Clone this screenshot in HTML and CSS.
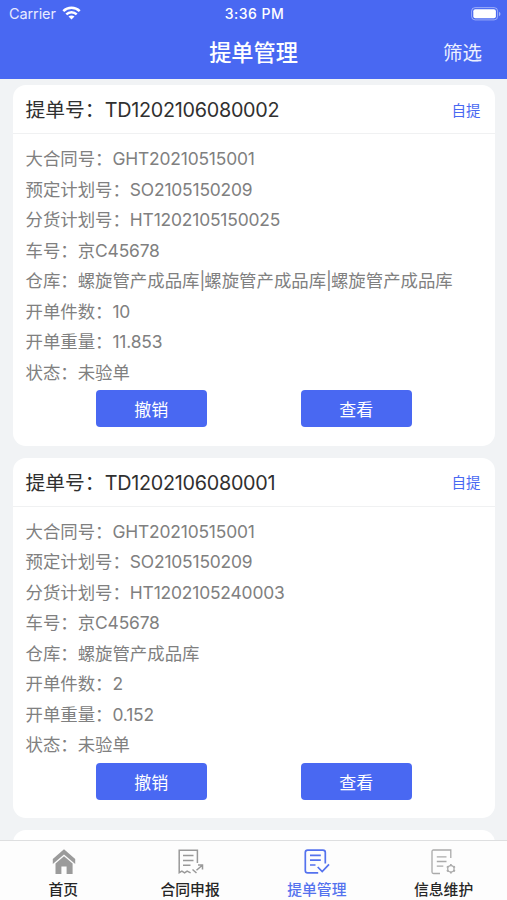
FILE: index.html
```html
<!DOCTYPE html>
<html lang="zh-CN">
<head>
<meta charset="utf-8">
<meta name="viewport" content="width=device-width, initial-scale=1">
<title>提单管理</title>
<link rel="stylesheet" href="styles.css">
</head>
<body>
<div class="app">
  <header class="header">
    <div class="status">
      <div class="carrier">Carrier
        <svg class="wifi" viewBox="0 0 18 14" fill="none" stroke="currentColor" stroke-width="2.5"><path d="M.8 5.100C5.300.6 12.700.6 17.200 5.100M3.800 8.400c3-2.900 7.400-2.900 10.400 0"/><path d="M9 13.500 6 10.600c1.700-1.500 4.300-1.500 6 0z" fill="currentColor" stroke="none"/></svg>
      </div>
      <div class="time">3:36 PM</div>
      <svg class="battery" viewBox="0 0 30 14"><rect x=".6" y=".6" width="26" height="12.300" rx="3.500" fill="none" stroke="currentColor" stroke-opacity=".45"/><rect x="2.300" y="2.300" width="22.600" height="9" rx="2" fill="currentColor"/><path d="M28 4.800v4.400q1.500-.7 1.500-2.200T28 4.800z" fill="currentColor" fill-opacity=".5"/></svg>
    </div>
    <div class="nav">
      <h1 class="nav-title">提单管理</h1>
      <span class="filter">筛选</span>
    </div>
  </header>
  <main class="list">
    <article class="card">
      <div class="card-head"><h2 class="card-title">提单号：<span class="number">TD1202106080002</span></h2><span class="tag">自提</span></div>
      <div class="rows">
        <p class="row">大合同号：<span class="value">GHT20210515001</span></p>
        <p class="row">预定计划号：<span class="value">SO2105150209</span></p>
        <p class="row">分货计划号：<span class="value">HT1202105150025</span></p>
        <p class="row">车号：京<span class="value">C45678</span></p>
        <p class="row">仓库：螺旋管产成品库<span class="bar">|</span>螺旋管产成品库<span class="bar">|</span>螺旋管产成品库</p>
        <p class="row">开单件数：<span class="value">10</span></p>
        <p class="row">开单重量：<span class="value">11.853</span></p>
        <p class="row">状态：未验单</p>
      </div>
      <div class="actions"><button class="btn">撤销</button><button class="btn">查看</button></div>
    </article>
    <article class="card">
      <div class="card-head"><h2 class="card-title">提单号：<span class="number">TD1202106080001</span></h2><span class="tag">自提</span></div>
      <div class="rows">
        <p class="row">大合同号：<span class="value">GHT20210515001</span></p>
        <p class="row">预定计划号：<span class="value">SO2105150209</span></p>
        <p class="row">分货计划号：<span class="value">HT1202105240003</span></p>
        <p class="row">车号：京<span class="value">C45678</span></p>
        <p class="row">仓库：螺旋管产成品库</p>
        <p class="row">开单件数：<span class="value">2</span></p>
        <p class="row">开单重量：<span class="value">0.152</span></p>
        <p class="row">状态：未验单</p>
      </div>
      <div class="actions"><button class="btn">撤销</button><button class="btn">查看</button></div>
    </article>
    <article class="card"></article>
  </main>
  <nav class="tabs">
    <div class="tab">
      <svg class="icon" viewBox="0 0 26 26" fill="#9b9b9b"><path d="M13 .2 24.200 9.900v5L13 5.400 1.800 14.900v-5z"/><path d="M13 7.200 21.600 14.500V25h-6v-7.600h-5.200V25H4.500V14.500z"/></svg>
      <span>首页</span>
    </div>
    <div class="tab">
      <svg class="icon" viewBox="0 0 26 26" fill="none" stroke="#999" stroke-width="1.500"><path d="M19.400 14V1.200H1.200v22.500l2.700-1.500 2.700 1.700 2.500-1.700 3.500 1.700M5 6.600h10.500M5 11.400h10.500M5 16.300h7.500M14.500 20.500l4 3.500M18.500 21.300l5.800-5M20 16h4.500v4.500"/></svg>
      <span>合同申报</span>
    </div>
    <div class="tab active">
      <svg class="icon" viewBox="0 0 26 26" fill="none" stroke="currentColor" stroke-width="1.700"><path d="M21.300 14.500V3.500q0-2.400-2.400-2.400H3.700q-2.400 0-2.400 2.400v18q0 2.400 2.400 2.400h10.500M6 6.300h10.800M6 11.200h10.800M6 16h5.500M13.700 18l4.500 4.600 6.800-7.300"/></svg>
      <span>提单管理</span>
    </div>
    <div class="tab">
      <svg class="icon" viewBox="0 0 26 26" fill="none" stroke="#aaa" stroke-width="1.300"><path d="M19.800 9V1H2.500Q1 1 1 2.500V23q0 1.500 1.500 1.500H9M5.800 7.800h9.700M5.800 12.500h9.700M5.800 17.200h6.500"/><circle cx="19.900" cy="19.800" r="3.200"/><path stroke-width="1.700" d="M19.900 15.100v1.500M19.900 23v1.500M15.800 17.450l1.300.75M22.700 21.400l1.300.75M15.800 22.150l1.300-.75M22.700 18.200l1.300-.75"/></svg>
      <span>信息维护</span>
    </div>
  </nav>
</div>
</body>
</html>
```

FILE: styles.css
```css
* { box-sizing: border-box; }
body { margin: 0; font-family: Inter, "Noto Sans CJK SC", sans-serif; }
h1, h2, p { margin: 0; font-weight: 400; }
.app { display: flex; flex-direction: column; height: 900px; overflow: hidden; background: #f1f3f5; }
.header { flex: 0 0 79px; background: #4968f2; color: #fff; }
.status { display: grid; grid-template-columns: 1fr auto 1fr; align-items: center; height: 27px; padding: 0 6px 0 9px; }
.carrier { display: flex; align-items: center; gap: 6px; font-size: 14.500px; letter-spacing: -0.1px; color: #e7eaff; }
.wifi { width: 19px; height: 14px; color: #fff; margin: -1px 0 0; }
.time { margin-right: 1px; font-size: 14px; font-weight: 500; letter-spacing: .5px; }
.battery { width: 30px; height: 14px; justify-self: end; }
.nav { display: grid; grid-template-columns: 1fr auto 1fr; align-items: center; height: 51px; padding: 1px 25px 0; }
.nav-title { grid-column: 2; font-size: 22.200px; font-weight: 500; line-height: 32px; }
.filter { justify-self: end; font-size: 19.500px; line-height: 30px; color: #edf0ff; }
.list { flex: 1; min-height: 0; overflow: hidden; padding: 6px 12.500px 0 13px; }
.card { height: 360.500px; margin-bottom: 12px; background: #fff; border-radius: 13px; }
.card-head { display: flex; align-items: center; justify-content: space-between; height: 49px; padding: 0 14px 0 12.500px; border-bottom: 1.500px solid #f0f1f2; }
.card-title { padding-top: 2px; font-size: 19.800px; line-height: 30px; color: #303030; white-space: nowrap; }
.number { letter-spacing: -0.27px; }
.tag { font-size: 14.500px; color: #4968f2; }
.rows { padding: 10px 0 0 12.500px; }
.row { height: 30.550px; line-height: 30.550px; font-size: 17.400px; color: #808080; white-space: nowrap; }
.value { letter-spacing: -0.17px; }
.bar { letter-spacing: -0.9px; }
.actions { display: flex; justify-content: space-between; padding: 2px 83px 0; }
.btn { width: 110.500px; height: 37px; padding: 0; border: 0; border-radius: 4px; background: #4968f2; color: #fff; font: inherit; font-size: 17px; }
.tabs { flex: 0 0 60px; display: grid; grid-template-columns: repeat(4, 1fr); background: #fdfdfd; border-top: 1px solid #dedfe0; }
.tab { display: flex; flex-direction: column; align-items: center; padding-top: 8px; color: #262626; font-size: 14.800px; font-weight: 500; line-height: 20px; }
.tab.active { color: #5472ee; }
.icon { width: 26px; height: 26px; margin: 0 0 5px 1px; }
```
